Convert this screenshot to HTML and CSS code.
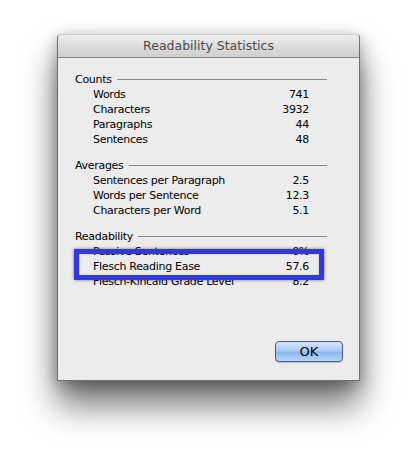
FILE: index.html
```html
<!DOCTYPE html>
<html>
<head>
<meta charset="utf-8">
<link rel="stylesheet" href="styles.css">
</head>
<body>
<div class="window">
  <div class="titlebar">Readability Statistics</div>
  <div class="content">
    <div class="section">
      <div class="heading"><span>Counts</span><span class="rule"></span></div>
      <div class="row"><span>Words</span><span>741</span></div>
      <div class="row"><span>Characters</span><span>3932</span></div>
      <div class="row"><span>Paragraphs</span><span>44</span></div>
      <div class="row"><span>Sentences</span><span>48</span></div>
    </div>
    <div class="section">
      <div class="heading"><span>Averages</span><span class="rule"></span></div>
      <div class="row"><span>Sentences per Paragraph</span><span>2.5</span></div>
      <div class="row"><span>Words per Sentence</span><span>12.3</span></div>
      <div class="row"><span>Characters per Word</span><span>5.1</span></div>
    </div>
    <div class="section">
      <div class="heading"><span>Readability</span><span class="rule"></span></div>
      <div class="row"><span>Passive Sentences</span><span>0%</span></div>
      <div class="row highlighted"><span>Flesch Reading Ease</span><span>57.6</span><div class="mark"></div></div>
      <div class="row"><span>Flesch-Kincaid Grade Level</span><span>8.2</span></div>
    </div>
    <div class="actions">
      <button class="ok">OK</button>
    </div>
  </div>
</div>
</body>
</html>
```
FILE: styles.css
```css
html, body {
  margin: 0;
  padding: 0;
  background: #ffffff;
}
body {
  box-sizing: border-box;
  min-height: 459px;
  padding-top: 34px;
  padding-left: 57px;
  font-family: "DejaVu Sans", "Liberation Sans", sans-serif;
  font-size: 11px;
  letter-spacing: -0.3px;
  color: #000;
}
.window {
  width: 301px;
  height: 345px;
  border: 1px solid #6e6e6e;
  border-top: 1px solid #c9c9c9;
  border-radius: 4px 4px 0 0;
  background: #ececec;
  box-shadow: 0 24px 34px rgba(0,0,0,0.55), 0 4px 16px rgba(0,0,0,0.3);
  display: flex;
  flex-direction: column;
}
.titlebar {
  height: 22px;
  line-height: 22px;
  text-align: center;
  font-size: 12.5px;
  letter-spacing: 0;
  color: #4a4a4a;
  background: linear-gradient(#ececec, #cfcfcf);
  border-bottom: 1px solid #838383;
  border-radius: 4px 4px 0 0;
}
.content {
  flex: 1;
  display: flex;
  flex-direction: column;
  padding: 14px 16px 18px 17px;
}
.section {
  width: 252px;
  margin-bottom: 11px;
}
.heading {
  display: flex;
  align-items: center;
  height: 15px;
  line-height: 15px;
}
.rule {
  flex: 1;
  height: 1px;
  background: #8a8a8a;
  margin-left: 5px;
}
.row {
  display: flex;
  justify-content: space-between;
  height: 15px;
  line-height: 15px;
  padding: 0 18px 0 18px;
}
.highlighted {
  position: relative;
}
.mark {
  position: absolute;
  left: -1px;
  right: 3px;
  top: -10px;
  bottom: -6px;
  border: 5px solid #3333f2;
  box-shadow: 0 0 3px rgba(0,0,0,0.5), inset 0 0 2px rgba(0,0,0,0.3);
}
.actions {
  margin-top: auto;
  display: flex;
  justify-content: flex-end;
}
.ok {
  width: 68px;
  height: 21px;
  padding: 0;
  font-family: "DejaVu Sans", "Liberation Sans", sans-serif;
  font-size: 13px;
  color: #000;
  border: 1px solid #4f5a86;
  border-radius: 4px;
  background: linear-gradient(#d3e4fb 0%, #a9caf3 45%, #8cb8ef 55%, #b5d6fb 100%);
  box-shadow: 0 1px 1px rgba(0,0,0,0.2);
}
```
